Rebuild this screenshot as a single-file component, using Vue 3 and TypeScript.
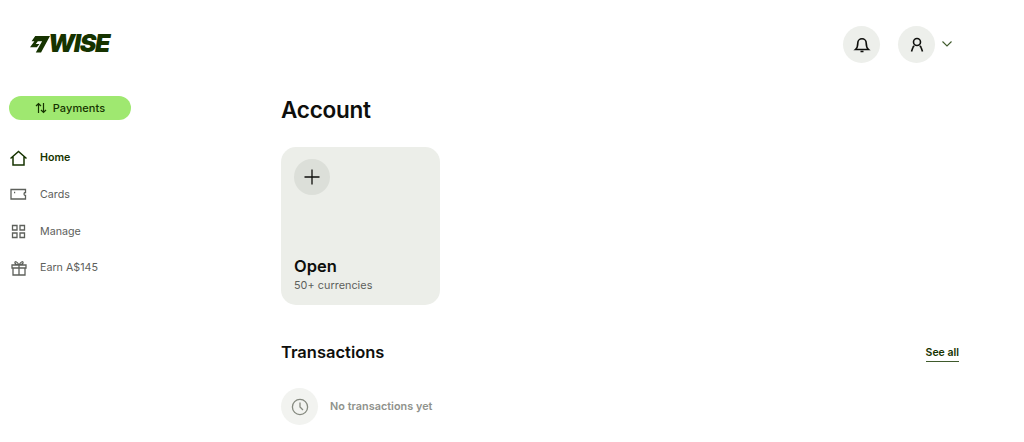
<template>
  <div class="page">
    <aside class="sidebar">
      <div class="logo">
        <svg width="20" height="18" viewBox="0 0 19 17"><path d="M5 1 L19 1 L10.5 16.5 L5.5 16.5 L11.5 6 L7.5 6 L5.5 8.5 L9 8.5 L6.5 11.5 L0 11.5 L4.2 6 L1.5 6 Z" fill="#163300" /></svg>
        <span class="wordmark">WISE</span>
      </div>
      <button class="payments">
        <svg width="12" height="12" viewBox="0 0 12 12" fill="none" stroke="#163300" stroke-width="1.2"><path d="M3.5 11V1.5M1 4l2.5-2.5L6 4M8.500 1v9.500M6 8l2.500 2.500L11 8" /></svg>
        Payments
      </button>
      <nav class="nav">
        <a v-for="item in navItems" :key="item.label" class="nav-item" :class="{ active: item.active }">
          <svg width="18" height="18" viewBox="0 0 18 18" fill="none" stroke="currentColor" :stroke-width="item.active ? 1.5 : 1.3">
            <path v-for="d in item.paths" :key="d" :d="d" />
          </svg>
          <span>{{ item.label }}</span>
        </a>
      </nav>
    </aside>
    <div class="content">
      <header class="topbar">
        <button class="round">
          <svg width="18" height="18" viewBox="0 0 18 18" fill="none" stroke="#0e0f0c" stroke-width="1.6"><path d="M4.800 7a4.200 4.200 0 0 1 8.400 0c0 3.400.6 5 2.300 6.500h-13C4.200 12 4.800 10.400 4.800 7ZM7.500 15.500h3" /></svg>
        </button>
        <button class="round user">
          <svg width="18" height="18" viewBox="0 0 18 18" fill="none" stroke="#0e0f0c" stroke-width="1.6"><circle cx="9" cy="6" r="3.500" /><path d="M3.500 15.500l1.500-4.200a1.600 1.600 0 0 1 1.400-1.200M14.500 15.500l-1.500-4.200a1.600 1.600 0 0 0-1.400-1.200" /></svg>
        </button>
        <svg class="chevron" width="10" height="6" viewBox="0 0 10 6" fill="none" stroke="#3f5a2c" stroke-width="1.100"><path d="M.5.5 5 5 9.500.5" /></svg>
      </header>
      <main class="main">
        <h1>Account</h1>
        <div class="card">
          <div class="plus">
            <svg width="18" height="18" viewBox="0 0 18 18" fill="none" stroke="#0e0f0c" stroke-width="1.300"><path d="M9 1.500v15M1.500 9h15" /></svg>
          </div>
          <strong>Open</strong>
          <small>50+ currencies</small>
        </div>
        <div class="section-head">
          <h2>Transactions</h2>
          <a class="see-all">See all</a>
        </div>
        <div class="empty">
          <div class="clock">
            <svg width="18" height="18" viewBox="0 0 18 18" fill="none" stroke="#85897f" stroke-width="1.300"><circle cx="9" cy="9" r="7.600" /><path d="M9 4.500V9l3 3" /></svg>
          </div>
          <span>No transactions yet</span>
        </div>
      </main>
    </div>
  </div>
</template>

<script setup lang="ts">
const navItems = [
  { label: 'Home', active: true, paths: ['M1.500 9.500 9.500 2.500l8 7M4 7.500V16h11V7.500'] },
  { label: 'Cards', active: false, paths: ['M2 4.500h14.500v3a1.500 1.500 0 0 0 0 3v3.500H2ZM5 7.500h1.200'] },
  { label: 'Manage', active: false, paths: ['M3.500 3.500h4.500v4.500H3.500ZM11 3.500h4.500v4.500H11ZM3.500 11h4.500v4.500H3.500ZM11 11h4.500v4.500H11Z'] },
  { label: 'Earn A$145', active: false, paths: ['M3 6h14v3H3ZM4 9v7h12V9M10 6v10M10 6C8 2 5.500 2 6 4c.3 1.300 2 2 4 2 2 0 3.700-.7 4-2 .5-2-2-2-4 2Z'] },
];
</script>

<style>
body { background: #fff; }
</style>

<style scoped>
.page { display: flex; width: 1024px; height: 442px; overflow: hidden; font-family: Inter, "Liberation Sans", sans-serif; color: #0e0f0c; }
.sidebar { width: 281px; flex: none; padding: 33px 0 0 9px; box-sizing: border-box; }
.logo { display: flex; align-items: center; gap: 0; height: 21px; margin-left: 21px; }
.wordmark { margin-left: -2px; font-family: Inter, sans-serif; font-size: 25px; font-weight: 900; font-style: italic; color: #163300; line-height: 21px; letter-spacing: -1.300px; }
.payments { display: flex; align-items: center; justify-content: center; gap: 6px; width: 122px; height: 24px; margin-top: 42px; border: 0; padding: 0; border-radius: 12px; background: #9fe870; color: #163300; font: 500 11px Inter, sans-serif; letter-spacing: .1px; }
.nav { display: flex; flex-direction: column; margin-top: 19.400px; }
.nav-item { display: flex; align-items: center; gap: 13px; height: 36.670px; color: #5d605b; font-size: 10.700px; }
.nav-item.active { color: #163300; font-weight: 600; }
.content { flex: 1; min-width: 0; }
.topbar { display: flex; align-items: center; height: 37px; margin-top: 26px; padding-left: 562px; }
.round { display: flex; align-items: center; justify-content: center; width: 37px; height: 37px; border: 0; padding: 0; border-radius: 50%; background: #edefeb; }
.user { margin-left: 18px; }
.chevron { margin-left: 7px; margin-top: -1px; }
.main { width: 678px; margin-top: 33px; }
h1 { margin: 0; font-size: 22.500px; line-height: 28px; font-weight: 600; letter-spacing: -.25px; }
.card { display: flex; flex-direction: column; width: 159px; height: 158px; margin-top: 23px; padding: 12px 13px; box-sizing: border-box; border-radius: 15px; background: #eceee9; }
.plus { display: flex; align-items: center; justify-content: center; width: 36px; height: 36px; border-radius: 50%; background: #dcdfd9; }
.card strong { margin-top: auto; font-size: 16.500px; line-height: 20px; font-weight: 600; }
.card small { margin-top: 3px; margin-bottom: 0; font-size: 10.800px; line-height: 14px; letter-spacing: .05px; color: #5d605b; }
.section-head { display: flex; align-items: center; justify-content: space-between; margin-top: 36px; height: 22px; }
h2 { margin: 0; font-size: 16.500px; font-weight: 600; line-height: 22px; }
.see-all { margin-top: 3px; padding-bottom: 1px; border-bottom: 1.500px solid #3f5a2c; color: #163300; font-size: 10.500px; font-weight: 600; line-height: 14px; }
.empty { display: flex; align-items: center; gap: 12px; margin-top: 25px; }
.clock { display: flex; align-items: center; justify-content: center; width: 37px; height: 37px; border-radius: 50%; background: #f2f3f0; }
.empty span { color: #8f928c; font-size: 10.800px; font-weight: 600; letter-spacing: .05px; }
</style>
